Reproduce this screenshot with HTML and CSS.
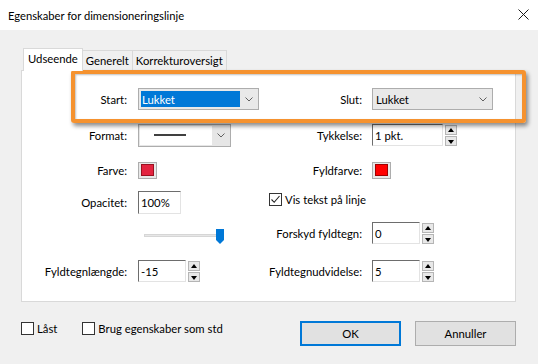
FILE: index.html
```html
<!DOCTYPE html>
<html>
<head>
<meta charset="utf-8">
<link rel="stylesheet" href="styles.css">
</head>
<body>
<div class="window">
  <div class="titlebar">
    <span class="title">Egenskaber for dimensioneringslinje</span>
    <svg class="close" width="11" height="11" viewBox="0 0 11 11"><path d="M0.5 0.5 L10.5 10.5 M10.5 0.5 L0.5 10.5" stroke="#1a1a1a" stroke-width="1" fill="none"/></svg>
  </div>
  <div class="main">
    <div class="tabs">
      <div class="tab active">Udseende</div>
      <div class="tab">Generelt</div>
      <div class="tab">Korrekturoversigt</div>
    </div>
    <div class="panel">
      <div class="grid">
        <!-- row 1 -->
        <div class="lbl">Start:</div>
        <div class="cell">
          <div class="select w121"><span class="sel-text hl">Lukket</span><span class="sel-arrow"><svg width="8" height="5" viewBox="0 0 8 5"><path d="M0.5 0.5 L4 4 L7.5 0.5" stroke="#606060" fill="none"/></svg></span></div>
        </div>
        <div class="lbl r">Slut:</div>
        <div class="cell">
          <div class="select w121"><span class="sel-text">Lukket</span><span class="sel-arrow"><svg width="8" height="5" viewBox="0 0 8 5"><path d="M0.5 0.5 L4 4 L7.5 0.5" stroke="#606060" fill="none"/></svg></span></div>
        </div>
        <!-- row 2 -->
        <div class="lbl">Format:</div>
        <div class="cell">
          <div class="combo"><span class="combo-text"><span class="line-sample"></span></span><span class="sel-arrow"><svg width="8" height="5" viewBox="0 0 8 5"><path d="M0.5 0.5 L4 4 L7.5 0.5" stroke="#606060" fill="none"/></svg></span></div>
        </div>
        <div class="lbl r">Tykkelse:</div>
        <div class="cell">
          <div class="input w71">1 pkt.</div>
          <div class="spin"><span class="up"></span><span class="down"></span></div>
        </div>
        <!-- row 3 -->
        <div class="lbl">Farve:</div>
        <div class="cell"><div class="swatch"><span class="crimson"></span></div></div>
        <div class="lbl r">Fyldfarve:</div>
        <div class="cell"><div class="swatch"><span class="red"></span></div></div>
        <!-- row 4 -->
        <div class="lbl">Opacitet:</div>
        <div class="cell"><div class="input w43 h23">100%</div></div>
        <div class="check-cell">
          <label class="check"><span class="box"><svg width="11" height="11" viewBox="0 0 11 11"><path d="M1.5 5.5 L4.2 8.3 L9.5 2" stroke="#222" stroke-width="1.1" fill="none"/></svg></span>Vis tekst på linje</label>
        </div>
        <!-- row 5 -->
        <div class="lbl"></div>
        <div class="cell top">
          <div class="slider"><span class="track"></span><svg class="thumb" width="8" height="15" viewBox="0 0 8 15"><path d="M0 0 H8 V11 L4 15 L0 11 Z" fill="#0078d7"/></svg></div>
        </div>
        <div class="lbl r">Forskyd fyldtegn:</div>
        <div class="cell">
          <div class="input w48">0</div>
          <div class="spin"><span class="up"></span><span class="down"></span></div>
        </div>
        <!-- row 6 -->
        <div class="lbl">Fyldtegnlængde:</div>
        <div class="cell">
          <div class="input w48">-15</div>
          <div class="spin"><span class="up"></span><span class="down"></span></div>
        </div>
        <div class="lbl r">Fyldtegnudvidelse:</div>
        <div class="cell">
          <div class="input w48">5</div>
          <div class="spin"><span class="up"></span><span class="down"></span></div>
        </div>
      </div>
    </div>
    <div class="footer">
      <label class="check foot-check"><span class="box"></span>Låst</label>
      <label class="check foot-check second"><span class="box"></span>Brug egenskaber som std</label>
      <div class="buttons">
        <div class="btn default">OK</div>
        <div class="btn">Annuller</div>
      </div>
    </div>
  </div>
  <div class="highlight"></div>
</div>
</body>
</html>
```
FILE: styles.css
```css
* { box-sizing: border-box; }
html, body { margin: 0; padding: 0; }
body {
  font-family: "Lato", "Open Sans", "Liberation Sans", sans-serif;
  font-size: 11.3px;
  color: #000;
}
.window {
  position: relative;
  width: 538px;
  height: 364px;
  background: #f0f0f0;
  overflow: hidden;
}
.titlebar {
  height: 30px;
  background: #fff;
  display: flex;
  align-items: center;
  justify-content: space-between;
  padding: 0 9px 0 8px;
}
.title { font-size: 11.2px; }
.close { display: block; margin-top: -1px; }

.main { padding: 18px 22px 0 21px; }

.tabs {
  display: flex;
  align-items: flex-end;
  height: 22px;
  padding-left: 2px;
}
.tab {
  height: 20px;
  line-height: 19px;
  padding: 0 3px;
  border: 1px solid #d9d9d9;
  border-left: none;
  border-bottom: none;
  background: #f0f0f0;
}
.tab.active {
  height: 23px;
  line-height: 20px;
  margin-bottom: -1px;
  border-left: 1px solid #d9d9d9;
  background: #fff;
  position: relative;
  z-index: 1;
  padding: 0 4px;
}

.panel {
  height: 232px;
  border: 1px solid #d9d9d9;
  background: #fff;
  padding-top: 17px;
}
.grid {
  display: grid;
  grid-template-columns: 116px 122px 112px 1fr;
  grid-template-rows: 36px 35px 32px 31px 38px 22px;
}
.lbl {
  height: 22px;
  display: flex;
  align-items: center;
  justify-content: flex-end;
  padding-right: 11px;
  white-space: nowrap;
}
.lbl.r { padding-right: 10px; }
.cell {
  height: 22px;
  display: flex;
  align-items: center;
}
.cell.top { align-items: flex-start; }

.select {
  height: 22px;
  display: flex;
  border: 1px solid #adadad;
  background: #e9e9e9;
  padding: 2px 0 2px 2px;
}
.w121 { width: 121px; }
.sel-text {
  flex: 1;
  display: flex;
  align-items: center;
  padding-left: 1px;
}
.sel-text.hl { background: #0078d7; color: #fff; }
.sel-arrow {
  width: 18px;
  display: flex;
  align-items: center;
  justify-content: center;
}
.combo {
  width: 93px;
  height: 23px;
  display: flex;
  border: 1px solid #adadad;
  background: #e6e6e6;
}
.combo-text {
  flex: 1;
  background: #fff;
  margin: 1px 0 1px 1px;
  display: flex;
  align-items: center;
  padding-left: 14px;
}
.line-sample {
  width: 32px;
  height: 2px;
  background: #404040;
}

.input {
  height: 22px;
  display: flex;
  align-items: center;
  padding-left: 2px;
  border-top: 1px solid #6d6d6d;
  border-left: 1px solid #6d6d6d;
  border-right: 1px solid #e3e3e3;
  border-bottom: 1px solid #e3e3e3;
  background: #fff;
}
.w71 { width: 71px; }
.w43 { width: 43px; }
.w48 { width: 48px; }
.h23 { height: 23px; }

.spin {
  display: flex;
  flex-direction: column;
  gap: 1px;
  margin-left: 2px;
}
.spin span {
  width: 12px;
  height: 10px;
  border: 1px solid #b5b5b5;
  background: #e8e8e8;
  position: relative;
}
.spin span::after {
  content: "";
  position: absolute;
  left: 2px;
  width: 0;
  height: 0;
  border-left: 3px solid transparent;
  border-right: 3px solid transparent;
}
.spin .up::after { top: 2px; border-bottom: 4px solid #000; }
.spin .down::after { top: 3px; border-top: 4px solid #000; }

.swatch {
  width: 19px;
  height: 17px;
  border: 1px solid #adadad;
  background: #e8e8e8;
  display: flex;
  align-items: center;
  justify-content: center;
}
.swatch span { width: 13px; height: 12px; }
.swatch .crimson { background: #e3233f; border: 1px solid #9a1020; }
.swatch .red { background: #ff0000; border: 1px solid #a00000; }

.check-cell {
  grid-column: 3 / 5;
  padding-left: 9px;
  padding-top: 2px;
}
.check {
  display: flex;
  align-items: center;
  white-space: nowrap;
}
.box {
  width: 13px;
  height: 13px;
  border: 1px solid #333;
  background: #fff;
  margin-right: 3px;
  display: flex;
  align-items: center;
  justify-content: center;
}

.slider {
  position: relative;
  width: 82px;
  height: 22px;
  margin-left: 6px;
  margin-top: 7px;
}
.track {
  position: absolute;
  left: 0;
  top: 5px;
  width: 78px;
  border: 1px solid #d6d6d6;
  background: #e7e7e7;
  box-sizing: content-box;
  height: 1px;
}
.thumb {
  position: absolute;
  left: 72px;
  top: 0;
}

.footer {
  display: flex;
  align-items: flex-start;
  margin-top: 19px;
  height: 25px;
}
.foot-check { margin-top: 1px; }
.foot-check.second { margin-left: 25px; }
.buttons {
  margin-left: auto;
  display: flex;
  gap: 14px;
}
.btn {
  width: 101px;
  height: 25px;
  border: 1px solid #adadad;
  background: #e1e1e1;
  display: flex;
  align-items: center;
  justify-content: center;
}
.btn.default { border: 2px solid #0078d7; }

.highlight {
  position: absolute;
  left: 71px;
  top: 70px;
  width: 455px;
  height: 53px;
  border: 4px solid #f5922f;
  border-radius: 3px;
  box-shadow: 2px 3px 4px rgba(0,0,0,0.45), inset 1px 1px 2px rgba(0,0,0,0.25);
  pointer-events: none;
}
```
